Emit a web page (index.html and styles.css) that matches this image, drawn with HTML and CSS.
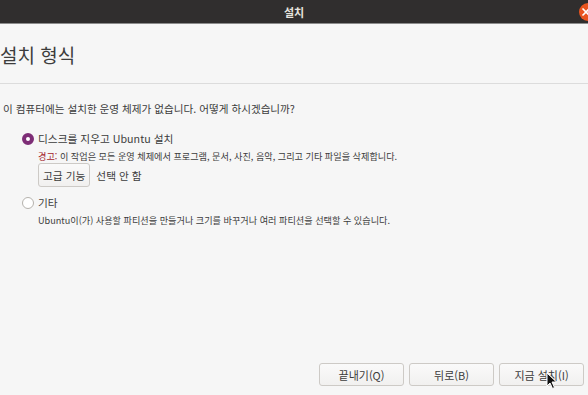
FILE: index.html
```html
<!DOCTYPE html>
<html lang="ko">
<head>
    <meta charset="UTF-8">
    <meta name="viewport" content="width=device-width, initial-scale=1.0">
    <title>설치</title>
    <link rel="stylesheet" href="styles.css">
</head>
<body>
    <div class="window">
        <header class="titlebar">
            <span class="title">설치</span>
            <span class="close">
                <svg width="18" height="18" viewBox="0 0 18 18">
                    <path d="M5.5 5.5 L12.5 12.5 M12.5 5.5 L5.5 12.5" stroke="#fff" stroke-width="1.6"/>
                </svg>
            </span>
        </header>

        <main class="page">
            <h1 class="page-title">설치 형식</h1>

            <div class="page-body">
                <p class="question">이 컴퓨터에는 설치한 운영 체제가 없습니다. 어떻게 하시겠습니까?</p>

                <div class="option">
                    <div class="radio-row">
                        <span class="radio checked"></span>
                        <span>디스크를 지우고 Ubuntu 설치</span>
                    </div>
                    <p class="note"><span class="warn">경고:</span> 이 작업은 모든 운영 체제에서 프로그램, 문서, 사진, 음악, 그리고 기타 파일을 삭제합니다.</p>
                    <div class="advanced">
                        <button type="button" class="btn">고급 기능</button>
                        <span>선택 안 함</span>
                    </div>
                </div>

                <div class="option">
                    <div class="radio-row second">
                        <span class="radio"></span>
                        <span>기타</span>
                    </div>
                    <p class="note">Ubuntu이(가) 사용할 파티션을 만들거나 크기를 바꾸거나 여러 파티션을 선택할 수 있습니다.</p>
                </div>
            </div>

            <footer class="actions">
                <button type="button" class="btn action">끝내기(Q)</button>
                <button type="button" class="btn action">뒤로(B)</button>
                <button type="button" class="btn action">지금 설치(I)</button>
            </footer>
        </main>

        <svg class="cursor" width="12" height="18" viewBox="0 0 12 18">
            <path d="M1 1 L1 14 L4 11 L6.5 16.5 L8.5 15.5 L6 10 L10.5 10 Z" fill="#111" stroke="#fff" stroke-width="1"/>
        </svg>
    </div>
</body>
</html>
```

FILE: styles.css
```css
body {
    margin: 0;
    font-family: "Noto Sans CJK KR", "Noto Sans", sans-serif;
    background-color: #f6f6f6;
    color: #3c3c3c;
}
.window {
    position: relative;
    width: 588px;
    height: 395px;
    display: flex;
    flex-direction: column;
    overflow: hidden;
}
.titlebar {
    position: relative;
    height: 23px;
    flex-shrink: 0;
    background-color: #302e2e;
    border-bottom: 1px solid #8c8c8c;
    display: flex;
    justify-content: center;
    align-items: center;
    overflow: hidden;
}
.title {
    color: #e6e3de;
    font-size: 11px;
    font-weight: bold;
}
.close {
    position: absolute;
    left: 579px;
    top: 3px;
    width: 18px;
    height: 18px;
    border-radius: 50%;
    background-color: #e9541f;
}
.close svg {
    display: block;
    margin-left: -2px;
}
.page {
    flex: 1;
    display: flex;
    flex-direction: column;
}
.page-title {
    margin: 17px 0 0;
    padding: 0 0 14px 0;
    font-size: 19px;
    font-weight: normal;
    line-height: 28px;
    color: #3d3d3d;
    border-bottom: 1px solid #dcdcdc;
}
.page-body {
    padding-left: 3px;
}
.question {
    margin: 17px 0 0;
    font-size: 10.6px;
    line-height: 16px;
}
.option {
    padding-left: 20px;
}
.radio-row {
    display: flex;
    align-items: center;
    gap: 4px;
    margin-top: 14px;
    margin-left: -1px;
    font-size: 10.7px;
    line-height: 16px;
}
.radio-row.second {
    margin-top: 8px;
}
.radio {
    width: 10px;
    height: 10px;
    border-radius: 50%;
    border: 1px solid #b5b2ad;
    background-color: #fff;
    box-sizing: content-box;
}
.radio.checked {
    width: 4px;
    height: 4px;
    border: 4px solid #7d2d76;
}
.note {
    margin: 2px 0 0 15px;
    font-size: 9.15px;
    line-height: 14px;
}
.warn {
    color: #a3232b;
}
.advanced {
    display: flex;
    align-items: center;
    gap: 6px;
    margin-left: 15px;
    font-size: 10.7px;
}
.btn {
    font-family: inherit;
    font-size: 11px;
    color: #3c3c3c;
    height: 24px;
    padding: 0 4px;
    border: 1px solid #cdcac6;
    border-radius: 3px;
    background: linear-gradient(#fafafa, #f1f0ef);
}
.advanced .btn {
    font-size: 10.7px;
}
.actions {
    margin-top: auto;
    display: flex;
    justify-content: flex-end;
    gap: 5px;
    padding: 0 4px 9px 0;
}
.action {
    width: 85px;
    height: 23px;
}
.cursor {
    position: absolute;
    left: 546px;
    top: 372px;
}
```
